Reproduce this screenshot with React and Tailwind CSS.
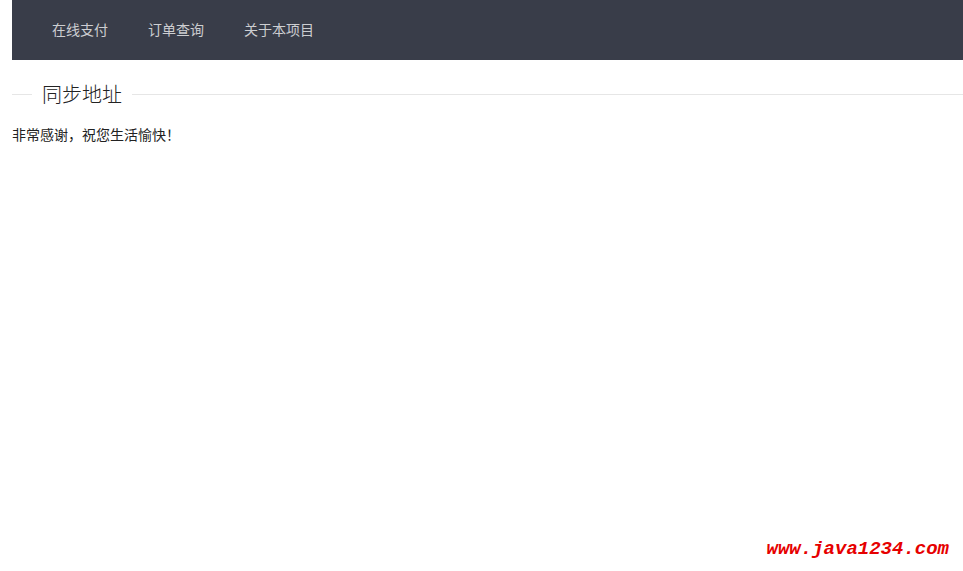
import React from 'react';

const navItems = ['在线支付', '订单查询', '关于本项目'];

export default function App() {
    return (
        <div className="relative h-[571px] w-[963px] bg-white pl-[12px] font-['Noto_Sans_CJK_SC',sans-serif] text-[#333]">
            <nav className="flex h-[60px] items-center bg-[#393d49] px-[20px]">
                {navItems.map((item) => (
                    <a key={item} href="#" className="px-[20px] pb-[2px] text-[14px] leading-[58px] text-[rgba(255,255,255,0.75)]">
                        {item}
                    </a>
                ))}
            </nav>

            <div className="mt-[20px] flex items-center">
                <div className="h-px w-[20px] bg-[#e6e6e6]" />
                <span className="px-[10px] text-[20px] font-light leading-[28px] text-[#222]">同步地址</span>
                <div className="h-px flex-1 bg-[#e6e6e6]" />
            </div>

            <p className="mt-[16px] text-[14px] leading-[20px] text-[#222]">非常感谢，祝您生活愉快！</p>

            <div className="absolute bottom-[12px] right-[14px] font-['Liberation_Mono',monospace] text-[19px] font-bold italic leading-none text-[#e60000]">
                www.java1234.com
            </div>
        </div>
    );
}
